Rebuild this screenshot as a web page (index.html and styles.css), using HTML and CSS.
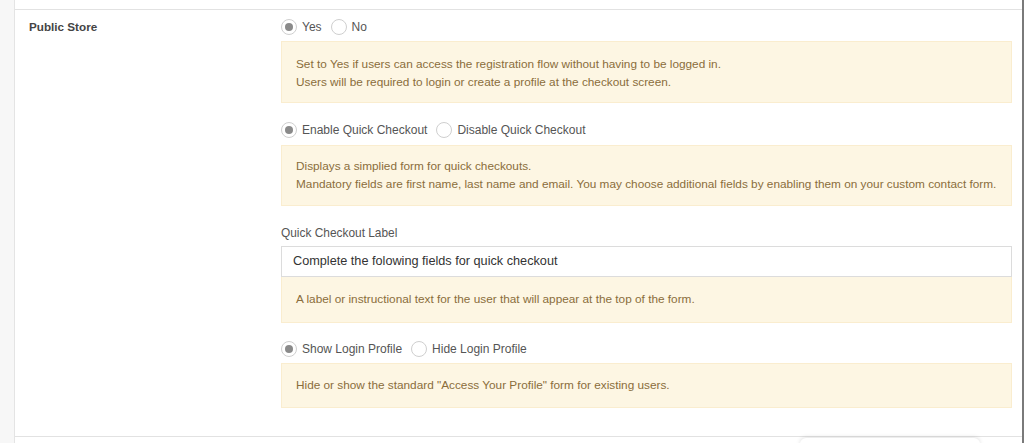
FILE: index.html
```html
<!DOCTYPE html>
<html>
<head>
<meta charset="utf-8">
<link rel="stylesheet" href="styles.css">
</head>
<body>
<div class="page">
  <div class="sidebar"></div>
  <div class="main">
    <div class="top"></div>
    <div class="row">
      <div class="label-col">Public Store</div>
      <div class="fields">
        <div class="radios">
          <label class="radio"><span class="dot checked"></span>Yes</label>
          <label class="radio"><span class="dot"></span>No</label>
        </div>
        <div class="notice n1">Set to Yes if users can access the registration flow without having to be logged in.<br>Users will be required to login or create a profile at the checkout screen.</div>

        <div class="radios r2">
          <label class="radio"><span class="dot checked"></span>Enable Quick Checkout</label>
          <label class="radio"><span class="dot"></span>Disable Quick Checkout</label>
        </div>
        <div class="notice n2">Displays a simplied form for quick checkouts.<br>Mandatory fields are first name, last name and email. You may choose additional fields by enabling them on your custom contact form.</div>

        <div class="field-label">Quick Checkout Label</div>
        <div class="input">Complete the folowing fields for quick checkout</div>
        <div class="notice n3">A label or instructional text for the user that will appear at the top of the form.</div>

        <div class="radios r3">
          <label class="radio"><span class="dot checked"></span>Show Login Profile</label>
          <label class="radio"><span class="dot"></span>Hide Login Profile</label>
        </div>
        <div class="notice n4">Hide or show the standard "Access Your Profile" form for existing users.</div>
      </div>
    </div>
    <div class="bottom"></div>
  </div>
  <div class="float-tab"></div>
</div>
</body>
</html>
```

FILE: styles.css
```css
* { box-sizing: border-box; }
html, body {
  margin: 0;
  padding: 0;
  background: #fff;
  font-family: "Liberation Sans", Arial, sans-serif;
}
.page {
  position: relative;
  display: flex;
  width: 1024px;
  height: 443px;
  overflow: hidden;
}
.sidebar {
  width: 15px;
  background: #f7f7f7;
  border-right: 1px solid #e4e4e4;
  flex: none;
}
.main {
  flex: 1;
  display: flex;
  flex-direction: column;
  border-right: 2px solid #7a7a7a;
}
.top {
  height: 10px;
  border-bottom: 1px solid #e2e2e2;
  flex: none;
}
.row {
  display: flex;
  height: 426px;
  flex: none;
}
.label-col {
  width: 266px;
  padding: 9px 0 0 14px;
  font-size: 11.7px;
  font-weight: bold;
  color: #444;
  line-height: 16px;
  flex: none;
}
.fields {
  width: 731px;
  padding-top: 9px;
  flex: none;
}
.radios {
  display: flex;
  height: 16px;
  align-items: center;
  gap: 9px;
  font-size: 12px;
  color: #555;
}
.radio {
  display: flex;
  align-items: center;
  gap: 5px;
  line-height: 16px;
}
.dot {
  width: 16px;
  height: 16px;
  border-radius: 50%;
  border: 1px solid #cfcfcf;
  background: #fff;
  position: relative;
  flex: none;
}
.dot.checked::after {
  content: "";
  position: absolute;
  left: 3px;
  top: 3px;
  width: 8px;
  height: 8px;
  border-radius: 50%;
  background: #8a8a8a;
}
.notice {
  background: #fdf6e3;
  border: 1px solid #faedcf;
  color: #8a6d3b;
  font-size: 11.8px;
  line-height: 18px;
  padding: 13px 14px 11px;
}
.n1 { margin-top: 6px; }
.r2 { margin-top: 19px; }
.n2 { margin-top: 7px; padding-top: 11px; padding-bottom: 12px; }
.field-label {
  margin-top: 19px;
  font-size: 11.9px;
  color: #555;
  line-height: 16px;
}
.input {
  margin-top: 5px;
  height: 31px;
  border: 1px solid #dcdcdc;
  padding: 0 11px;
  line-height: 29px;
  font-size: 12.7px;
  color: #333;
}
.n3 { border-top: none; padding-top: 13px; padding-bottom: 14px; }
.r3 { margin-top: 18px; }
.n4 { margin-top: 6px; padding-top: 12px; padding-bottom: 13px; }
.bottom {
  border-top: 1px solid #e2e2e2;
  flex: 1;
}
.float-tab {
  position: absolute;
  left: 800px;
  top: 438px;
  width: 180px;
  height: 12px;
  background: #fff;
  border-radius: 6px;
  box-shadow: 0 -1px 4px rgba(0,0,0,0.12);
}
```
